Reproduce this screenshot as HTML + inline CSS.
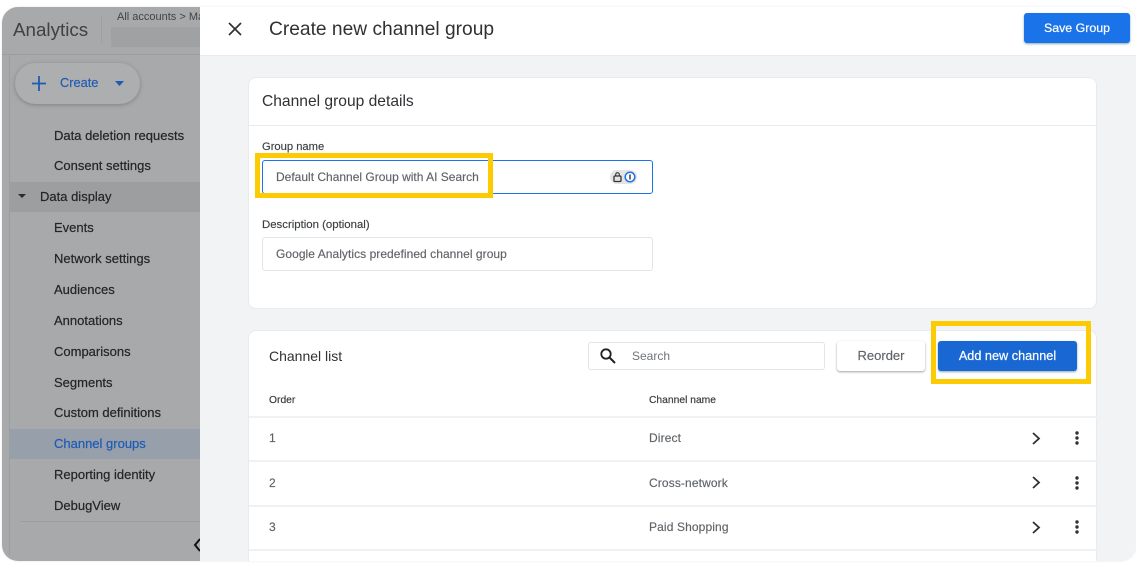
<!DOCTYPE html>
<html><head><meta charset="utf-8"><style>
html,body{margin:0;padding:0;background:#fff}
#p{position:relative;width:1136px;height:568px;overflow:hidden;background:#fff;font-family:"Liberation Sans",sans-serif;font-size:13px;color:#3c4043}
#p div,#p svg{position:absolute}
.t{white-space:nowrap;line-height:16px}
#frame{left:2px;top:7px;width:1134px;height:554px;border-radius:16px;overflow:hidden;background:#f1f3f4;box-shadow:0 0 2px #e2e3e5}
.n{left:54px;color:#242526;font-size:13px;white-space:nowrap;line-height:16px;-webkit-text-stroke:.2px #242526}
.line{height:2px;background:#f0f1f3;left:249px;width:848px}
.y{border:5px solid #fdcb02;box-sizing:border-box}
</style></head><body><div id="p">
<div id="frame"></div>
<div style="left:2px;top:7px;width:198px;height:554px;background:#a8a9aa;border-radius:16px 0 0 16px"></div>
<div style="left:2px;top:54px;width:198px;height:1px;background:#9c9d9e"></div>
<div style="left:9px;top:55px;width:1px;height:500px;background:#9c9d9e"></div>
<div class="t" style="left:13px;top:18px;font-size:18.800px;line-height:24px;color:#3f4143">Analytics</div>
<div style="left:101px;top:15px;width:1px;height:27px;background:#9f9f9f"></div>
<div class="t" style="left:117px;top:9px;font-size:11px;color:#424345;width:83px;overflow:hidden">All accounts &gt; Ma</div>
<div style="left:111px;top:27px;width:89px;height:20px;background:#a0a1a3"></div>
<div style="left:15px;top:63px;width:125px;height:41px;border-radius:21px;background:#adaeaf;box-shadow:0 1px 4px #808080"></div>
<svg style="left:31px;top:75px" width="16" height="17"><path d="M8 1v15M1 8.500h14" stroke="#1d5bb5" stroke-width="1.800" fill="none"/></svg>
<div class="t" style="left:60px;top:75px;color:#1d5bb5;font-size:12.800px;-webkit-text-stroke:.15px #1d5bb5">Create</div>
<svg style="left:114px;top:81px" width="11" height="6"><path d="M1 0h9L5.500 5z" fill="#1d5bb5"/></svg>
<div class="n" style="top:128px">Data deletion requests</div>
<div class="n" style="top:158px">Consent settings</div>
<div style="left:10px;top:182px;width:190px;height:30px;background:#9d9e9f"></div>
<svg style="left:18px;top:194px" width="9" height="5"><path d="M0 0h8L4 4z" fill="#2a2b2c"/></svg>
<div class="n" style="left:40px;top:189px">Data display</div>
<div class="n" style="top:220px">Events</div>
<div class="n" style="top:251px">Network settings</div>
<div class="n" style="top:282px">Audiences</div>
<div class="n" style="top:313px">Annotations</div>
<div class="n" style="top:344px">Comparisons</div>
<div class="n" style="top:375px">Segments</div>
<div class="n" style="top:405px">Custom definitions</div>
<div style="left:10px;top:429px;width:190px;height:30px;background:#979fab"></div>
<div class="n" style="top:436px;color:#1d5bb5;-webkit-text-stroke:.2px #1d5bb5">Channel groups</div>
<div class="n" style="top:467px">Reporting identity</div>
<div class="n" style="top:498px">DebugView</div>
<div style="left:20px;top:521px;width:180px;height:1px;background:#9d9e9f"></div>
<svg style="left:193px;top:538px" width="7" height="14"><path d="M7 1L2 7l5 6" stroke="#111" stroke-width="2" fill="none"/></svg>

<div style="left:200px;top:7px;width:936px;height:48px;background:#fff;border-radius:0 16px 0 0;border-bottom:1px solid #e8eaed"></div>
<svg style="left:228px;top:22px" width="14" height="14"><path d="M1 1l12 12M13 1L1 13" stroke="#303134" stroke-width="1.700" fill="none"/></svg>
<div class="t" style="left:269px;top:18px;font-size:19.200px;line-height:24px;color:#303134">Create new channel group</div>
<div style="left:1024px;top:13px;width:106px;height:30px;background:#1a73e8;border-radius:3px;box-shadow:0 1px 2px #8aa"></div>
<div class="t" style="left:1024px;top:20px;width:106px;text-align:center;color:#fff;font-size:12.400px;-webkit-text-stroke:.2px #fff">Save Group</div>

<div style="left:248px;top:77px;width:849px;height:232px;box-sizing:border-box;background:#fff;border:1px solid #e8eaed;border-radius:8px"></div>
<div class="t" style="left:262px;top:92px;font-size:15.600px;line-height:20px;color:#303134">Channel group details</div>
<div style="left:249px;top:125px;width:847px;height:1px;background:#e8eaed"></div>
<div class="t" style="left:262px;top:139px;font-size:11.200px;color:#3c4043;-webkit-text-stroke:.15px #3c4043">Group name</div>
<div style="left:262px;top:160px;width:391px;height:34px;box-sizing:border-box;border:1.500px solid #1a73e8;border-radius:3px;background:#fff"></div>
<div class="t" style="left:276px;top:169px;font-size:12px;color:#5f6368;-webkit-text-stroke:.15px #5f6368">Default Channel Group with AI Search</div>
<div style="left:610px;top:170px;width:27px;height:14px;border-radius:7px;background:#e4e4e4"></div>
<svg style="left:612px;top:171px" width="24" height="12"><rect x="2" y="5" width="7" height="5.500" rx="1" fill="none" stroke="#333" stroke-width="1.300"/><path d="M3.700 5V3.500a1.800 1.800 0 0 1 3.600 0V5" fill="none" stroke="#333" stroke-width="1.100"/><circle cx="18" cy="6" r="4.800" fill="#fff" stroke="#1a73e8" stroke-width="1.500"/><path d="M18 3.500v5" stroke="#333" stroke-width="1.400"/></svg>
<div class="y" style="left:255px;top:153px;width:238px;height:45px"></div>
<div class="t" style="left:262px;top:217px;font-size:11.400px;color:#3c4043;-webkit-text-stroke:.15px #3c4043">Description (optional)</div>
<div style="left:262px;top:237px;width:391px;height:34px;box-sizing:border-box;border:1px solid #e3e5e8;border-radius:3px;background:#fff"></div>
<div class="t" style="left:276px;top:246px;font-size:12px;color:#5f6368;letter-spacing:.05px;-webkit-text-stroke:.15px #5f6368">Google Analytics predefined channel group</div>

<div style="left:248px;top:330px;width:849px;height:231px;box-sizing:border-box;background:#fff;border:1px solid #e8eaed;border-bottom:0;border-radius:8px 8px 0 0"></div>
<div class="t" style="left:269px;top:347px;font-size:14px;line-height:18px;color:#303134">Channel list</div>
<div style="left:588px;top:342px;width:237px;height:28px;box-sizing:border-box;border:1px solid #e3e5e8;border-radius:3px"></div>
<svg style="left:599px;top:347px" width="18" height="18"><circle cx="7" cy="7" r="4.700" fill="none" stroke="#202124" stroke-width="1.800"/><path d="M10.500 10.500L16 16" stroke="#202124" stroke-width="2"/></svg>
<div class="t" style="left:632px;top:348px;font-size:12px;color:#70757a">Search</div>
<div style="left:837px;top:341px;width:88px;height:30px;background:#fff;border-radius:3px;box-shadow:0 1px 2px #a0a0a0"></div>
<div class="t" style="left:837px;top:348px;width:88px;text-align:center;color:#5f6368;-webkit-text-stroke:.15px #5f6368">Reorder</div>
<div style="left:938px;top:341px;width:139px;height:30px;background:#1967d2;border-radius:3px;box-shadow:0 1px 2px #8aa"></div>
<div class="t" style="left:938px;top:348px;width:139px;text-align:center;color:#fff;font-size:12.700px;-webkit-text-stroke:.2px #fff">Add new channel</div>
<div class="y" style="left:931px;top:321px;width:160px;height:63px"></div>
<div class="t" style="left:269px;top:393px;font-size:10.300px;color:#3c4043;-webkit-text-stroke:.2px #3c4043">Order</div>
<div class="t" style="left:649px;top:393px;font-size:10.300px;color:#3c4043;-webkit-text-stroke:.2px #3c4043">Channel name</div>
<div class="line" style="top:416px"></div>
<div class="t" style="left:269px;top:430px;font-size:12px;color:#5f6368;-webkit-text-stroke:.15px #5f6368">1</div>
<div class="t" style="left:649px;top:430px;font-size:12px;color:#5f6368;letter-spacing:.12px;-webkit-text-stroke:.15px #5f6368">Direct</div>
<div class="line" style="top:460px"></div>
<div class="t" style="left:269px;top:475px;font-size:12px;color:#5f6368;-webkit-text-stroke:.15px #5f6368">2</div>
<div class="t" style="left:649px;top:475px;font-size:12px;color:#5f6368;letter-spacing:.12px;-webkit-text-stroke:.15px #5f6368">Cross-network</div>
<div class="line" style="top:505px"></div>
<div class="t" style="left:269px;top:519px;font-size:12px;color:#5f6368;-webkit-text-stroke:.15px #5f6368">3</div>
<div class="t" style="left:649px;top:519px;font-size:12px;color:#5f6368;letter-spacing:.12px;-webkit-text-stroke:.15px #5f6368">Paid Shopping</div>
<div class="line" style="top:549px"></div>
<svg style="left:1031px;top:432px" width="10" height="13"><path d="M2 1l6 5.500L2 12" fill="none" stroke="#303134" stroke-width="1.800"/></svg>
<svg style="left:1031px;top:476px" width="10" height="13"><path d="M2 1l6 5.500L2 12" fill="none" stroke="#303134" stroke-width="1.800"/></svg>
<svg style="left:1031px;top:521px" width="10" height="13"><path d="M2 1l6 5.500L2 12" fill="none" stroke="#303134" stroke-width="1.800"/></svg>
<svg style="left:1074px;top:431px" width="6" height="14"><circle cx="3" cy="2" r="1.700" fill="#303134"/><circle cx="3" cy="7" r="1.700" fill="#303134"/><circle cx="3" cy="12" r="1.700" fill="#303134"/></svg>
<svg style="left:1074px;top:476px" width="6" height="14"><circle cx="3" cy="2" r="1.700" fill="#303134"/><circle cx="3" cy="7" r="1.700" fill="#303134"/><circle cx="3" cy="12" r="1.700" fill="#303134"/></svg>
<svg style="left:1074px;top:520px" width="6" height="14"><circle cx="3" cy="2" r="1.700" fill="#303134"/><circle cx="3" cy="7" r="1.700" fill="#303134"/><circle cx="3" cy="12" r="1.700" fill="#303134"/></svg>
</div></body></html>
